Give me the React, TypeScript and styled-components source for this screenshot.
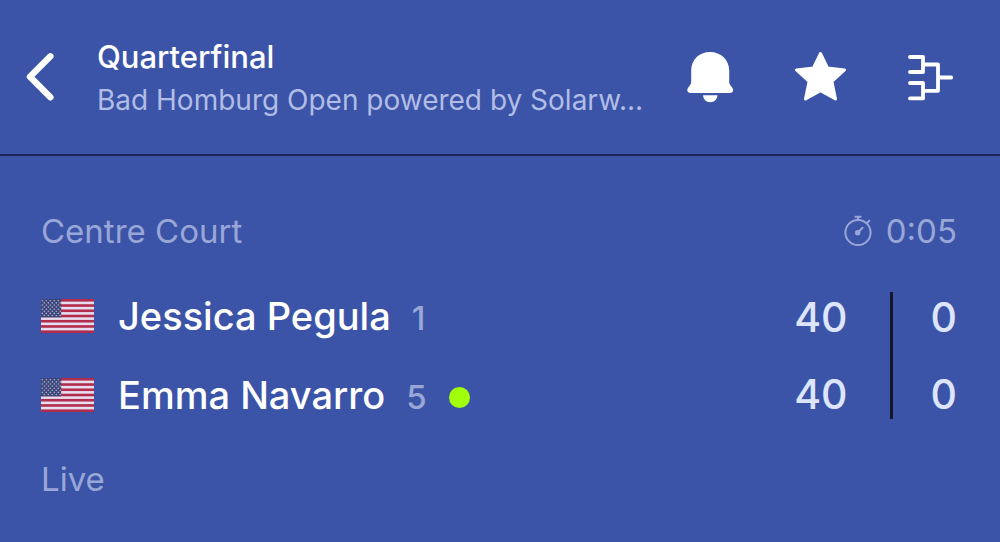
import React from "react";
import styled, { createGlobalStyle } from "styled-components";

const GlobalStyle = createGlobalStyle`
  * { box-sizing: border-box; }
  body {
    margin: 0;
    background: #3b54a7;
    font-family: Inter, "Liberation Sans", sans-serif;
    color: #ffffff;
  }
`;

const Header = styled.header`
  display: flex;
  align-items: center;
  padding: 32px 44px 32px 24px;
  border-bottom: 2px solid #1c2856;
`;

const IconButton = styled.button`
  display: flex;
  flex: none;
  padding: 0;
  border: 0;
  background: none;
  color: inherit;
  cursor: pointer;
`;

const Titles = styled.div`
  flex: 1;
  min-width: 0;
  margin-left: 41px;
  padding-top: 4px;
`;

const Title = styled.h1`
  margin: 0;
  font-size: 31px;
  line-height: 42px;
  font-weight: 500;
`;

const Subtitle = styled.p`
  margin: 0;
  font-size: 28px;
  line-height: 44px;
  color: #b1bde6;
  white-space: nowrap;
  overflow: hidden;
  text-overflow: ellipsis;
`;

const Actions = styled.nav`
  display: flex;
  gap: 58px;
  margin-left: 36px;
`;

const Main = styled.main`
  padding: 53px 43px 40px 41px;
`;

const InfoRow = styled.div`
  display: flex;
  justify-content: space-between;
  align-items: center;
  font-size: 33px;
  line-height: 44px;
  color: #99a7d8;
`;

const Timer = styled.span`
  display: flex;
  align-items: center;
  gap: 12px;
`;

const Match = styled.section`
  display: flex;
  margin: 39px 0 38px;
`;

const Players = styled.ul`
  flex: 1;
  margin: 0;
  padding: 0;
  list-style: none;
`;

const Player = styled.li`
  display: flex;
  align-items: center;
  height: 48px;
  margin-bottom: 31px;
  font-size: 38px;
  font-weight: 500;

  &:last-child { margin-bottom: 0; }
`;

const Name = styled.span`
  margin-left: 24px;
`;

const Rank = styled.span`
  margin-left: 21px;
  padding-top: 4px;
  font-size: 33px;
  color: #99a7d8;
`;

const ServeDot = styled.span`
  width: 21px;
  height: 21px;
  margin: 4px 0 0 22px;
  border-radius: 50%;
  background: #a2ff0a;
`;

const Scores = styled.ol<{ $divided?: boolean }>`
  display: flex;
  flex-direction: column;
  justify-content: space-between;
  margin: 0;
  padding: 0 0 0 ${(p) => (p.$divided ? "38px" : "0")};
  margin-left: ${(p) => (p.$divided ? "42px" : "0")};
  border-left: ${(p) => (p.$divided ? "3px solid #17142b" : "0")};
  list-style: none;
  font-size: 41px;
  line-height: 50px;
  font-weight: 500;
  text-align: right;
  color: #dde5fd;
`;

const BackIcon = () => (
  <svg width="32" height="52" viewBox="0 0 32 52" fill="none" stroke="currentColor" strokeWidth="6.4" strokeLinecap="round" strokeLinejoin="round" aria-hidden="true">
    <path d="M26.400 5.300 6 25.700l20.400 20.600" />
  </svg>
);

const BellIcon = () => (
  <svg width="52" height="52" viewBox="0 0 52 52" fill="currentColor" aria-hidden="true">
    <path d="M26 1C15 1 7.200 9 7.200 19.500v11.500c0 1.200-.4 2.200-1.200 3.200-1.700 2-2.700 3.300-2.700 4.800 0 1.800 1.300 3 3.300 3h39.200c2 0 3.300-1.200 3.300-3 0-1.500-1-2.800-2.700-4.800-.8-1-1.200-2-1.200-3.200V19.500C45.200 9 37 1 26 1Z" />
    <path d="M19 44.300h14.500c-.3 4.200-3.300 7-7.250 7S19.300 48.500 19 44.300Z" />
  </svg>
);

const StarIcon = () => (
  <svg width="52" height="52" viewBox="0 0 52 52" fill="currentColor" stroke="currentColor" strokeWidth="3" strokeLinejoin="round" aria-hidden="true">
    <path d="m26.500 2.500 7 14.500 17 2-12.600 11.300 3.600 17.700-15-8.300-15 8.300 3.600-17.700L2.500 19l17-2Z" />
  </svg>
);

const BracketIcon = () => (
  <svg width="52" height="52" viewBox="0 0 52 52" fill="none" stroke="currentColor" strokeWidth="3.8" strokeLinecap="round" strokeLinejoin="round" aria-hidden="true">
    <path d="M6 6h13v15H6M6 32h13v15.400H6M19 13.500h15v26.300H19M34 26.500h13.300" />
  </svg>
);

const StopwatchIcon = () => (
  <svg width="30" height="32" viewBox="0 0 30 32" fill="none" stroke="currentColor" strokeWidth="2" strokeLinecap="round" aria-hidden="true">
    <circle cx="14" cy="17.500" r="12.600" />
    <path d="M11.500 1.800h5M14 2v3M23.500 7.500l1.800-1.800" />
    <path d="m14 17.500 4.500-4.700" />
    <circle cx="13.700" cy="17.800" r="1.700" fill="currentColor" />
  </svg>
);

const STRIPES = [0, 2, 4, 6, 8, 10, 12];
const STAR_ROWS = [0, 1, 2, 3, 4, 5, 6, 7];
const STAR_COLS = [0, 1, 2, 3, 4];

const Flag = () => (
  <svg width="53" height="34" viewBox="0 0 53 34" role="img" aria-label="USA">
    <rect width="53" height="34" fill="#e6def0" />
    {STRIPES.map((i) => (
      <rect key={i} y={(i * 34) / 13} width="53" height={34 / 13} fill="#b22c4c" />
    ))}
    <rect width="20.200" height="18.300" fill="#3d4678" />
    {STAR_ROWS.map((r) =>
      STAR_COLS.map((c) => (
        <circle key={`${r}-${c}`} cx={1.3 + c * 4 + (r % 2) * 2} cy={1.8 + r * 2.1} r="0.8" fill="#a9afd0" />
      ))
    )}
  </svg>
);

const players = [
  { name: "Jessica Pegula", rank: 1, serving: false, game: 40, set: 0 },
  { name: "Emma Navarro", rank: 5, serving: true, game: 40, set: 0 },
];

export default function App() {
  return (
    <>
      <GlobalStyle />
      <Header>
        <IconButton type="button" aria-label="Back"><BackIcon /></IconButton>
        <Titles>
          <Title>Quarterfinal</Title>
          <Subtitle>Bad Homburg Open powered by Solarw...</Subtitle>
        </Titles>
        <Actions>
          <IconButton type="button" aria-label="Notifications"><BellIcon /></IconButton>
          <IconButton type="button" aria-label="Favourite"><StarIcon /></IconButton>
          <IconButton type="button" aria-label="Draw"><BracketIcon /></IconButton>
        </Actions>
      </Header>
      <Main>
        <InfoRow>
          <span>Centre Court</span>
          <Timer><StopwatchIcon />0:05</Timer>
        </InfoRow>
        <Match>
          <Players>
            {players.map((p) => (
              <Player key={p.name}>
                <Flag />
                <Name>{p.name}</Name>
                <Rank>{p.rank}</Rank>
                {p.serving && <ServeDot />}
              </Player>
            ))}
          </Players>
          <Scores>
            {players.map((p) => <li key={p.name}>{p.game}</li>)}
          </Scores>
          <Scores $divided>
            {players.map((p) => <li key={p.name}>{p.set}</li>)}
          </Scores>
        </Match>
        <InfoRow>
          <span>Live</span>
        </InfoRow>
      </Main>
    </>
  );
}
